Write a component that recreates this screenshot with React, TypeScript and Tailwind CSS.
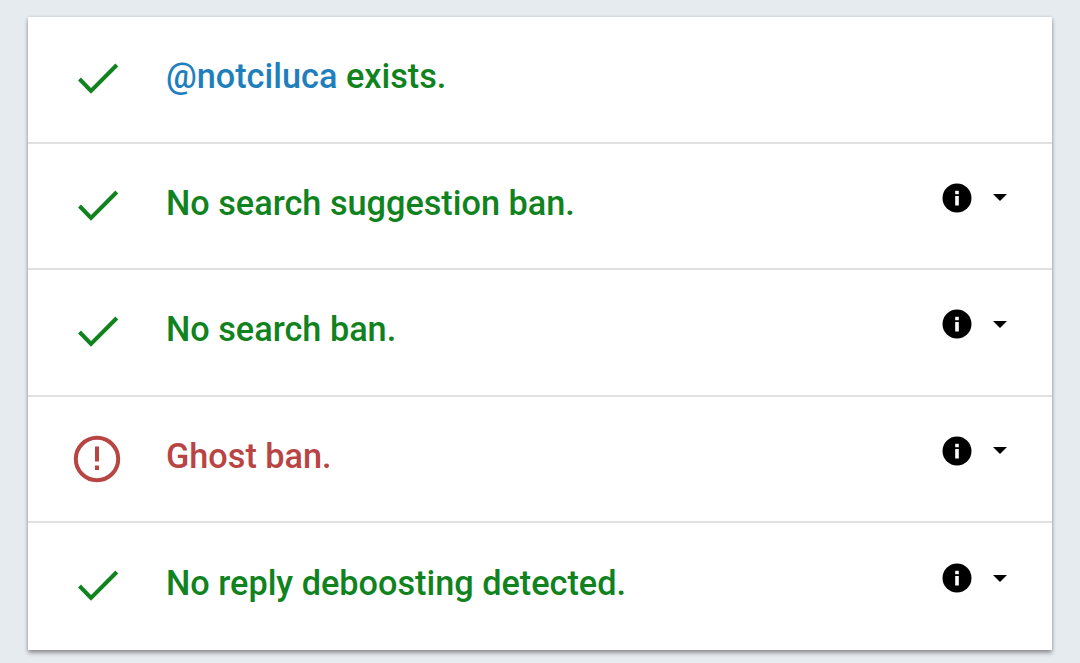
const rows = [
  { id: 'exists', ok: true, text: 'exists.', handle: '@notciluca', more: false },
  { id: 'suggest', ok: true, text: 'No search suggestion ban.', more: true },
  { id: 'search', ok: true, text: 'No search ban.', more: true },
  { id: 'ghost', ok: false, text: 'Ghost ban.', more: true },
  { id: 'reply', ok: true, text: 'No reply deboosting detected.', more: true },
];

function CheckIcon() {
  return (
    <svg width="48" height="48" viewBox="0 0 48 48" fill="none">
      <path d="M6.5 24 L18 36 L43.8 10" stroke="#10821e" strokeWidth="4" />
    </svg>
  );
}

function AlertIcon() {
  return (
    <svg width="48" height="48" viewBox="0 0 48 48" fill="none">
      <circle cx="24" cy="24" r="21.2" stroke="#b94444" strokeWidth="4" />
      <rect x="22" y="11.5" width="4" height="15" fill="#b94444" />
      <rect x="22" y="30.5" width="4" height="4.5" fill="#b94444" />
    </svg>
  );
}

function InfoIcon() {
  return (
    <svg width="30" height="30" viewBox="0 0 30 30">
      <circle cx="15" cy="15" r="14.5" fill="#000" />
      <rect x="13.2" y="13" width="3.6" height="9.5" fill="#fff" />
      <rect x="13.2" y="7.8" width="3.6" height="3.4" fill="#fff" />
    </svg>
  );
}

export default function App() {
  return (
    <div className="min-h-[663px] bg-[#e6ebf0] px-[28px] pt-[17px] font-['Roboto',sans-serif]">
      <div className="bg-white shadow-[0_3px_4px_rgba(0,0,0,0.35),0_0_3px_rgba(0,0,0,0.15)] divide-y-2 divide-[#e0e0e0]">
        {rows.map(r => (
          <div key={r.id} className="h-[126.55px] flex items-center pl-[45px] pr-[45px]">
            <div className="w-[48px] h-[48px]">
              {r.ok ? <CheckIcon /> : <AlertIcon />}
            </div>
            <div className={`ml-[45px] -mt-[6px] text-[34.25px] leading-[44px] font-medium ${r.ok ? 'text-[#10821e]' : 'text-[#b94444]'}`}>
              {r.handle && <span className="text-[#1f7fbd]">{r.handle} </span>}
              {r.text}
            </div>
            {r.more && (
              <div className="ml-auto -mt-[16px] flex items-center gap-[21px]">
                <InfoIcon />
                <div className="w-0 h-0 border-x-[7.5px] border-x-transparent border-t-[7.5px] border-t-black" />
              </div>
            )}
          </div>
        ))}
      </div>
    </div>
  );
}
